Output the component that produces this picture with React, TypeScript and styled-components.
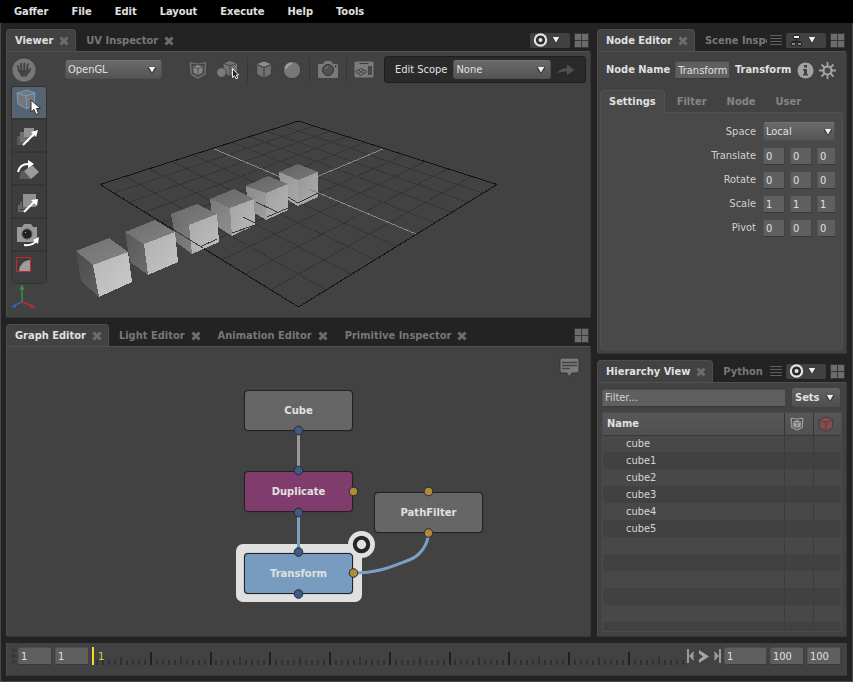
import React from "react";
import styled, { createGlobalStyle, css } from "styled-components";

const GlobalStyle = createGlobalStyle`
  *, *::before, *::after { box-sizing: border-box; }
  body { margin: 0; background: #232323; }
  body, button, input, select, table {
    font-family: "DejaVu Sans Condensed", "DejaVu Sans", sans-serif;
    font-size: 11px;
    line-height: 14px;
    color: #e0e0e0;
  }
  button { padding: 0; border: 0; background: none; cursor: pointer; }
  svg { display: block; flex: none; }
`;

const Window = styled.div`
  display: flex;
  flex-direction: column;
  height: 100vh;
  background: #232323;
  box-shadow: inset 1px 0 #484848, inset -1px -1px #484848;
`;

const MenuBar = styled.nav`
  display: flex;
  gap: 1px;
  height: 23px;
  padding-left: 3px;
  background: #000;
`;

const MenuItem = styled.button`
  padding: 0 11px;
  font-weight: 700;
`;

const Workspace = styled.main`
  display: grid;
  grid-template-columns: 585fr 250fr;
  gap: 6px;
  flex: 1;
  min-height: 0;
  padding: 6px;
`;

const Column = styled.div`
  display: flex;
  flex-direction: column;
  gap: 6px;
  min-width: 0;
  min-height: 0;
`;

const Panel = styled.section<{ $share: number }>`
  display: flex;
  flex-direction: column;
  flex: ${(p) => p.$share} 1 0;
  min-height: 0;
`;

const PanelBody = styled.div`
  display: flex;
  flex-direction: column;
  flex: 1;
  min-height: 0;
  background: #424242;
  border: 1px solid #383838;
  border-top-color: #505050;
  border-left-color: #4c4c4c;
  border-radius: 0 2px 2px 2px;
`;

const TabStrip = styled.div`
  display: flex;
  align-items: center;
  height: 22px;
  padding-right: 2px;
`;

const TabList = styled.div`
  display: flex;
  flex: 1;
  min-width: 0;
  height: 22px;
  overflow: hidden;
`;

const Tab = styled.div<{ $active?: boolean }>`
  display: flex;
  align-items: center;
  flex: none;
  gap: 6px;
  height: 23px;
  padding: 1px 8px 0 9px;
  color: #777;
  ${(p) =>
    p.$active &&
    css`
      margin-right: 1px;
      padding: 0 6px 0 8px;
      color: #e0e0e0;
      background: #424242;
      border: 1px solid #4d4d4d;
      border-bottom: 0;
      border-radius: 4px 4px 0 0;
    `}
`;

const TabLabel = styled.button`
  color: inherit;
  font-weight: 700;
  white-space: nowrap;
`;

const TabTools = styled.div`
  display: flex;
  align-items: center;
  gap: 4px;
  padding-left: 3px;
`;

const PinButton = styled.button`
  display: flex;
  align-items: center;
  gap: 4px;
  width: 40px;
  height: 15px;
  padding-left: 3px;
  background: #414141;
  border-radius: 2px;
`;

const IconButton = styled.button`
  display: grid;
  place-items: center;
  flex: none;
`;

/* Form controls */

const SelectFrame = styled.span<{ $width: number; $cut?: boolean }>`
  display: grid;
  grid-template-columns: 1fr 8px;
  align-items: center;
  width: ${(p) => p.$width}px;
  height: 19px;
  padding-right: ${(p) => (p.$cut ? 2 : 5)}px;
  background: linear-gradient(#6a6a6a, #545454);
  border: 1px solid #505050;
  border-top-color: #737373;
  border-radius: ${(p) => (p.$cut ? "3px 0 0 3px" : "3px")};
`;

const NativeSelect = styled.select`
  grid-area: 1 / 1 / 2 / 3;
  width: 100%;
  height: 17px;
  padding: 0 0 0 2px;
  appearance: none;
  background: none;
  border: 0;
`;

const SelectArrow = styled.span`
  grid-area: 1 / 2 / 2 / 3;
  pointer-events: none;
`;

const TextInput = styled.input<{ $width?: number }>`
  flex: ${(p) => (p.$width ? "none" : "1")};
  width: ${(p) => (p.$width ? p.$width + "px" : "0")};
  height: 18px;
  padding: 0 2px;
  background: #5f5f5f;
  border: 1px solid #535353;
  border-top-color: #4c4c4c;
  border-bottom-color: #383838;
  border-right-color: #424242;
  border-radius: 2px;
  &::placeholder { color: #d0d0d0; opacity: 1; }
`;

/* Viewer */

const ViewerToolbar = styled.div`
  display: flex;
  align-items: center;
  height: 31px;
  padding: 4px 4px 0 5px;
`;

const ToolbarGroup = styled.div<{ $before?: number }>`
  display: flex;
  align-items: center;
  margin-left: ${(p) => p.$before || 0}px;
`;

const Separator = styled.span`
  width: 1px;
  height: 26px;
  margin: 0 7px;
  background: #373737;
`;

const EditScope = styled.div`
  display: flex;
  align-items: center;
  gap: 6px;
  width: 202px;
  height: 27px;
  margin-left: auto;
  padding-left: 10px;
  background: #2a2a2a;
  border: 1px solid #1d1d1d;
  border-radius: 3px;
`;

const ViewerStage = styled.div`
  display: flex;
  flex: 1;
  min-height: 0;
`;

const ToolRail = styled.div`
  display: flex;
  flex-direction: column;
  width: 36px;
  margin: 3px 0 0 4px;
`;

const ToolBox = styled.div`
  overflow: hidden;
  border: 1px solid #323232;
  border-radius: 4px;
`;

const ToolButton = styled.button<{ $active?: boolean }>`
  display: grid;
  place-items: center;
  width: 34px;
  height: 33px;
  background: ${(p) => (p.$active ? "#566370" : "#3d3d3d")};
  border-bottom: 2px solid #353535;
  &:last-child { height: 31px; border-bottom: 0; }
`;

const Scene = styled.svg`
  flex: 1;
  min-width: 0;
  height: 100%;
`;

/* Graph editor */

const Canvas = styled.div`
  position: relative;
  flex: 1;
  overflow: hidden;
`;

const NoteButton = styled(IconButton)`
  position: absolute;
  top: 10px;
  right: 10px;
`;

const GraphNode = styled.button<{ $x: number; $y: number; $fill: string }>`
  position: absolute;
  left: ${(p) => p.$x}px;
  top: ${(p) => p.$y}px;
  width: 109px;
  height: 41px;
  background: ${(p) => p.$fill};
  border: 1px solid #222;
  border-radius: 4px;
  box-shadow: 0 0 1px #222;
  font-family: "DejaVu Sans", sans-serif;
  font-size: 10px;
  font-weight: 700;
`;

const NodeHighlight = styled.span`
  position: absolute;
  left: 229px;
  top: 197px;
  width: 126px;
  height: 58px;
  background: #e0e0e0;
  border-radius: 7px;
`;

const GraphLayer = styled.svg`
  position: absolute;
  left: 0;
  top: 0;
  pointer-events: none;
`;

/* Node editor */

const NodeHeader = styled.div`
  display: flex;
  align-items: center;
  height: 34px;
  padding: 2px 10px 0 8px;
  font-weight: 700;
`;

const NodeName = styled.label`
  display: flex;
  align-items: center;
  gap: 5px;
  width: 124px;
`;

const NodeType = styled.span`
  flex: 1;
  padding-left: 5px;
`;

const HeaderIcons = styled.div`
  display: flex;
  gap: 5px;
`;

const Inset = styled.div`
  display: flex;
  flex-direction: column;
  flex: 1;
  min-height: 0;
  margin: 4px 3px 3px 2px;
`;

const InsetTabs = styled.div`
  display: flex;
  height: 22px;
`;

const InsetTab = styled.button<{ $active?: boolean }>`
  height: ${(p) => (p.$active ? 23 : 22)}px;
  padding: 0 ${(p) => (p.$active ? 8 : 9)}px;
  margin-right: ${(p) => (p.$active ? 2 : 0)}px;
  color: ${(p) => (p.$active ? "#e0e0e0" : "#858585")};
  font-weight: 700;
  position: relative;
  border-radius: 4px 4px 0 0;
  border: 1px solid ${(p) => (p.$active ? "#535353" : "transparent")};
  border-bottom: 0;
  background: ${(p) => (p.$active ? "#494949" : "none")};
`;

const Settings = styled.div`
  display: flex;
  flex-direction: column;
  gap: 6px;
  flex: 1;
  padding: 9px 7px;
  background: #494949;
  border: 1px solid #505050;
  border-radius: 0 2px 2px 2px;
`;

const Field = styled.div`
  display: flex;
  justify-content: flex-end;
  align-items: center;
  gap: 7px;
  height: 18px;
  color: #d0d0d0;
  &:first-child { height: 19px; }
`;

const Vector = styled.div`
  display: flex;
  gap: 5px;
  width: 72px;
  overflow: hidden;
`;

/* Hierarchy */

const FilterBar = styled.div`
  display: flex;
  align-items: center;
  gap: 6px;
  padding: 5px 6px 5px 4px;
`;

const SetsButton = styled.button`
  display: flex;
  align-items: center;
  justify-content: space-between;
  width: 48px;
  height: 19px;
  padding: 0 6px 0 3px;
  font-weight: 700;
  background: linear-gradient(#626262, #4e4e4e);
  border-radius: 3px;
`;

const TableFrame = styled.div`
  flex: 1;
  min-height: 0;
  margin: 0 4px 4px 4px;
  overflow: hidden;
  border: 1px solid #4c4c4c;
`;

const SceneTable = styled.table`
  width: 100%;
  table-layout: fixed;
  border-collapse: collapse;
`;

const HeadCell = styled.th<{ $width?: number }>`
  width: ${(p) => (p.$width ? p.$width + "px" : "auto")};
  height: 22px;
  padding: 1px 4px 0;
  text-align: left;
  background: linear-gradient(#575757, #505050);
  border-bottom: 1px solid #383838;
  & + & { border-left: 1px solid #353535; }
`;

const BodyRow = styled.tr`
  height: 17px;
  background: #414141;
  color: #d4d4d4;
  &:nth-child(odd) { background: #484848; }
`;

const BodyCell = styled.td`
  padding: 0 0 0 23px;
  & + & { border-left: 1px solid #3d3d3d; }
`;

/* Timeline */

const Timeline = styled.footer`
  display: flex;
  align-items: flex-start;
  gap: 3px;
  height: 33px;
  margin: 0 6px 6px;
  padding: 4px 6px 0 5px;
  background: #424242;
  border-bottom: 1px solid #383838;
  border-left: 1px solid #4c4c4c;
`;

const Ruler = styled.svg`
  flex: 1;
  min-width: 0;
  height: 18px;
`;

const Transport = styled.div`
  display: flex;
  align-items: center;
  gap: 5px;
  height: 18px;
`;

/* Icons */

const CloseIcon = () => (
  <svg width="10" height="10" viewBox="0 0 10 10">
    <path d="M1.500 1.500 8.500 8.500M8.500 1.500 1.500 8.500" stroke="#6d6d6d" strokeWidth="3" />
  </svg>
);

const ArrowIcon = () => (
  <svg width="8" height="8" viewBox="0 0 8 8">
    <path d="M0 1H8V3L4 8L0 3Z" fill="#3c3c3c" />
    <path d="M.8 1H7.200L4 6.600Z" fill="#f0f0f0" />
  </svg>
);

const LayoutIcon = () => (
  <svg width="15" height="15" viewBox="0 0 15 15">
    <path d="M0 0h15v15H0z" fill="#373737" />
    <path d="M1 1h6v6H1zM8 1h6v6H8zM1 8h6v6H1zM8 8h6v6H8z" fill="#6c6c6c" />
  </svg>
);

const MenuLinesIcon = () => (
  <svg width="12" height="12" viewBox="0 0 12 12">
    <path d="M0 1.500h12M0 4.500h12M0 7.500h12M0 10.500h12" stroke="#5e5e5e" />
  </svg>
);

const TargetIcon = () => (
  <svg width="15" height="14" viewBox="0 0 15 14">
    <circle cx="7.500" cy="7" r="6.700" fill="#e6e6e6" />
    <circle cx="7.500" cy="7" r="4.600" fill="#2b2b2b" />
    <circle cx="7.500" cy="7" r="2" fill="#e6e6e6" />
  </svg>
);

const NodesIcon = () => (
  <svg width="15" height="13" viewBox="0 0 15 13">
    <path d="M7.500 4v4M3.500 10V7.500h8V10" fill="none" stroke="#222" />
    <path d="M4.500 1.500h6v3h-6z" fill="#eee" stroke="#222" />
    <path d="M2.500 8.500h4v3h-4zM8.500 8.500h4v3h-4z" fill="#888" stroke="#222" />
  </svg>
);

const HandIcon = () => (
  <svg width="24" height="24" viewBox="0 0 24 24">
    <circle cx="12" cy="12" r="11.500" fill="#777" />
    <g stroke="#444" strokeWidth="2" strokeLinecap="round">
      <path d="M7 13 6 8M9.500 12 9 6M12.300 12V5.500M15 12l.8-5.500M16 15l2.200-4" />
    </g>
    <path d="M6.200 12h9.600l1 1.500-2 5H9z" fill="#444" />
  </svg>
);

const ShadingIcon = () => (
  <svg width="20" height="20" viewBox="0 0 20 20">
    <path d="M10 3 18.500 1 19 4l-1 11.200L10 19.500 2 15.200 1 4l.5-3z" fill="#6a6a6a" stroke="#3a3a3a" strokeWidth=".8" />
    <path d="M10 4.500 16.500 3.500 16 13.500 10 17 4 13.500 3.500 3.500z" fill="#454545" />
    <path d="M10 5l4.800 1.600-.4 6.200L10 15.300l-4.400-2.500-.4-6.200z" fill="#858585" />
    <path d="M5.500 6.800l4.500 2 4.500-2M10 8.800v6.200" fill="none" stroke="#444" strokeWidth=".8" />
  </svg>
);

const VisibilityIcon = () => (
  <svg width="24" height="20" viewBox="0 0 24 20">
    <path d="M14 .5l8 2.600-.5 10L14 16.500 7 13V3z" fill="#747474" stroke="#3a3a3a" />
    <path d="M7 3.200l7 2.500 8-2.500M14 5.700v10" fill="none" stroke="#444" />
    <circle cx="5.500" cy="12.500" r="4.800" fill="#7c7c7c" stroke="#444" />
    <path d="M16.500 8.500v9l2-1.700 1.500 3 1.800-.8-1.400-3h2.200z" fill="#222" stroke="#eee" strokeWidth="1" />
  </svg>
);

const CubeIcon = () => (
  <svg width="18" height="20" viewBox="0 0 18 20">
    <path d="M9 1l7.800 3-.8 10.500-7 4-7-4L1.200 4z" fill="#717171" stroke="#353535" strokeWidth=".8" />
    <path d="M2 4l7-2.500L16 4 9 7z" fill="#8c8c8c" />
    <path d="M1.500 4.500 9 7.500l7.500-3M9 7.500V18" fill="none" stroke="#383838" />
  </svg>
);

const SphereIcon = () => (
  <svg width="20" height="20" viewBox="0 0 20 20">
    <circle cx="10" cy="10" r="8.700" fill="#777" stroke="#393939" />
    <path d="M4 8q1-3.500 5-4.500" fill="none" stroke="#a2a2a2" strokeWidth="2" strokeLinecap="round" />
  </svg>
);

const CameraIcon = () => (
  <svg width="22" height="19" viewBox="0 0 22 19">
    <path d="M2 4h4l2-3h6l2 3h3.500q1.500 0 1.500 1.500v11q0 1.500-1.500 1.500h-17Q1 18 1 16.500v-11Q1 4 2 4z" fill="#7a7a7a" />
    <circle cx="11" cy="10" r="5.500" fill="#505050" stroke="#333" />
    <path d="M8 9q1-2 3-2" fill="none" stroke="#888" />
    <circle cx="18.500" cy="6.500" r="1" fill="#333" />
  </svg>
);

const RenderIcon = () => (
  <svg width="20" height="17" viewBox="0 0 20 17">
    <rect x=".5" y=".5" width="19" height="16" rx="1.500" fill="#7b7b7b" />
    <path d="M5.500 2.500h9" stroke="#3c3c3c" />
    <path d="M14 5h4v9h-4z" fill="#484848" />
    <path d="M1.500 10.500 7 7.500l6 3-6 4zM4 9l6 3.500M10 9l-5.500 3.500" fill="none" stroke="#3c3c3c" strokeWidth=".9" />
  </svg>
);

const PublishIcon = () => (
  <svg width="18" height="12" viewBox="0 0 18 12">
    <path d="M0 9q4-5 10-5V.5L17.500 6 10 11V7.500Q5 7 0 9z" fill="#505050" />
  </svg>
);

const InfoIcon = () => (
  <svg width="17" height="17" viewBox="0 0 17 17">
    <circle cx="8.500" cy="8.500" r="8" fill="#a2a2a2" />
    <path d="M7 3h3v2.500H7zM6 7h4v5h1v1.500H6V12h1V8.500H6z" fill="#424242" />
  </svg>
);

const GearIcon = () => (
  <svg width="17" height="17" viewBox="0 0 17 17">
    <path d="M8.500 0v17M0 8.500h17M2.500 2.500l12 12M14.500 2.500l-12 12" stroke="#a2a2a2" strokeWidth="1.800" />
    <circle cx="8.500" cy="8.500" r="4" fill="#484848" stroke="#a2a2a2" strokeWidth="2.200" />
  </svg>
);

const CommentIcon = () => (
  <svg width="21" height="21" viewBox="0 0 21 21">
    <path d="M3 1h15q2 0 2 2v11q0 2-2 2h-5l-3 4-2-4H3q-2 0-2-2V3q0-2 2-2z" fill="#7b7b7b" stroke="#373737" />
    <path d="M3 5.500h15M3 8.500h15M3 11.500h8" stroke="#444" strokeWidth="1.500" />
  </svg>
);

const VisibleColumnIcon = () => (
  <svg width="16" height="16" viewBox="0 0 16 16">
    <path d="M8 2l6.500-1 .5 2-.7 9L8 15.300 1.700 12 1 3l.5-2z" fill="#9a9a9a" stroke="#444" strokeWidth=".7" />
    <path d="M8 3.500l5-.5-.5 8L8 13.500 3.500 11 3 3z" fill="#4c4c4c" />
    <path d="M8 4l4 1.500-.4 5L8 12.500l-3.600-2-.4-5z" fill="#a6a6a6" />
    <path d="M4.200 5.700 8 7.300l3.800-1.600M8 7.300v5" fill="none" stroke="#555" strokeWidth=".8" />
  </svg>
);

const ExcludedColumnIcon = () => (
  <svg width="16" height="16" viewBox="0 0 16 16">
    <path d="M8 1l7 2.500-.8 8.500L8 15.300 1.800 12 1 3.500z" fill="#854e4e" stroke="#4a3c3c" />
    <path d="M1 3.800 8 6.500l7-2.700M8 6.500v8" fill="none" stroke="#583c3c" />
  </svg>
);

const toolGlyphs: Record<string, React.ReactNode> = {
  "Select": (
    <>
      <path d="M5 5l10-3 8 3-1 11-7 5-9-5z" fill="#777" stroke="#6f9cc8" />
      <path d="M5 5l9 3 9-3M14 8l1 13" fill="none" stroke="#6f9cc8" />
      <path d="M19 12v12l3-2.500 2 5 2.500-1-2-5h4z" fill="#fff" stroke="#2c2c2c" />
    </>
  ),
  "Translate": (
    <>
      <path d="M5 15h8v9H5z" fill="#595959" />
      <path d="M8 11h9v10H8z" fill="#707070" />
      <path d="M12 7h10v9H12z" fill="#929292" />
      <path d="M11 24 22 13" stroke="#fff" strokeWidth="2" />
      <path d="M26 9l-7 2 5 5z" fill="#fff" />
    </>
  ),
  "Rotate": (
    <>
      <path d="M9 17l-2 8h12v-8z" fill="#5c5c5c" />
      <path d="M20 11l7 7-8 7-7-8z" fill="#9b9b9b" />
      <path d="M6 18Q8 9 18 10" fill="none" stroke="#fff" strokeWidth="2" />
      <path d="M16 6l6 4-6 4z" fill="#fff" />
    </>
  ),
  "Scale": (
    <>
      <path d="M7 18v6h6M9 15v6h6" fill="none" stroke="#666" strokeWidth="2" />
      <path d="M11 7h13v13H11z" fill="#929292" />
      <path d="M12 25 22 15" stroke="#fff" strokeWidth="2" />
      <path d="M26 12l-7 1 6 6z" fill="#fff" />
    </>
  ),
  "Camera": (
    <>
      <path d="M5 7h5l2-3h7l2 3h4v15H5z" fill="#999" />
      <circle cx="15" cy="14" r="5" fill="#222" stroke="#555" />
      <path d="M13 13l1-1" stroke="#bbb" />
      <path d="M12 25q9 1 13-5" fill="none" stroke="#fff" strokeWidth="2" />
      <path d="M21 20l6-3-1 7z" fill="#fff" />
    </>
  ),
  "Crop window": (
    <>
      <path d="M7 18Q8 8 18 7v11z" fill="#9d9d9d" />
      <path d="M4.500 4.500h14v14h-14z" fill="none" stroke="#c62828" />
    </>
  ),
};

/* Scene drawing */

const project = (u: number, v: number) => {
  const sum = u + v;
  const depth = 1 - 0.1586 * sum;
  return [298.5 + (99.25 * (u - v)) / depth, 184.5 + (41.82 * sum) / depth];
};

const line = (u1: number, v1: number, u2: number, v2: number) =>
  `M${project(u1, v1).join(" ")}L${project(u2, v2).join(" ")}`;

const steps = [-0.8, -0.6, -0.4, -0.2, 0, 0.2, 0.4, 0.6, 0.8];
const gridPath = steps.map((t) => line(t, -1, t, 1) + line(-1, t, 1, t)).join("");
const borderPath = line(-1, -1, 1, -1) + line(1, -1, 1, 1) + line(1, 1, -1, 1) + line(-1, 1, -1, -1);

type Box = { top: string; side: string; front: string; shades: [string, string, string] };

const boxes: Box[] = [
  { top: "279,172 298,164 318,172 298,180", side: "279,172 298,180 298,206 281,196", front: "298,180 318,172 318,197 298,206", shades: ["#6c6c6c", "#a2a2a2", "#a5a5a5"] },
  { top: "246,186 268,176 288,184 266,193", side: "246,186 266,193 266,220 248,209", front: "266,193 288,184 288,210 266,220", shades: ["#6d6d6d", "#969696", "#adadad"] },
  { top: "210,199 234,189 254,199 230,208", side: "210,199 230,208 232,236 213,224", front: "230,208 254,199 255,225 232,236", shades: ["#707070", "#858585", "#b2b2b2"] },
  { top: "171,214 197,204 217,214 189,225", side: "171,214 189,225 192,254 176,242", front: "189,225 217,214 219,242 192,254", shades: ["#747474", "#747474", "#b8b8b8"] },
  { top: "125,232 155,220 175,232 144,244", side: "125,232 144,244 148,275 130,262", front: "144,244 175,232 178,262 148,275", shades: ["#777", "#606060", "#bfbfbf"] },
  { top: "76,251 109,238 128,252 93,265", side: "76,251 93,265 99,297 81,281", front: "93,265 128,252 132,282 99,297", shades: ["#7a7a7a", "#525252", "#c6c6c6"] },
];

const ViewerScene = () => (
  <Scene viewBox="47 83 543 234" preserveAspectRatio="xMinYMin meet" shapeRendering="crispEdges" role="img" aria-label="3D scene">
    <defs>
      <linearGradient id="shade" x1="0" y1="0" x2="1" y2="1">
        <stop offset="0" stopColor="#000" stopOpacity=".08" />
        <stop offset="1" stopColor="#fff" stopOpacity=".08" />
      </linearGradient>
    </defs>
    <path d={gridPath} fill="none" stroke="#353535" />
    <path d={line(0, -1, 0, 1) + line(-1, 0, 1, 0)} stroke="#868686" />
    <path d={borderPath} fill="none" stroke="#141414" />
    {boxes.map((b) => (
      <g key={b.top}>
        <polygon points={b.top} fill={b.shades[0]} />
        <polygon points={b.side} fill={b.shades[1]} />
        <polygon points={b.front} fill={b.shades[2]} />
        <polygon points={b.top} fill="url(#shade)" />
        <polygon points={b.side} fill="url(#shade)" />
        <polygon points={b.front} fill="url(#shade)" />
      </g>
    ))}
    <path d="M174 230 203 248M200 247 217 239M243 217 255 223M232 233 255 225M256 202 277 212M267 217 288 208M288 197 298 203 318 193" fill="none" stroke="#3a3a3a" />
    <path d="M309 189 318 193" stroke="#868686" />
  </Scene>
);

const Gizmo = () => (
  <svg width="36" height="28" viewBox="11 284 36 28">
    <path d="M22 302V287" stroke="#2f9a35" strokeWidth="1.500" />
    <path d="M22 284.500l2.500 5h-5z" fill="#2f9a35" />
    <path d="M22 302 15 305" stroke="#3a62c0" strokeWidth="1.500" />
    <path d="M11 307.500l4-4 1 4z" fill="#3a62c0" />
    <path d="M22 302l9 3.500" stroke="#b83030" strokeWidth="1.500" />
    <path d="M36 307.500l-5-4-1 4z" fill="#b83030" />
  </svg>
);

/* Shared pieces */

const Select = ({ label, value, width, cut }: { label: string; value: string; width: number; cut?: boolean }) => (
  <SelectFrame $width={width} $cut={cut}>
    <NativeSelect aria-label={label} defaultValue={value}>
      <option>{value}</option>
    </NativeSelect>
    <SelectArrow><ArrowIcon /></SelectArrow>
  </SelectFrame>
);

const PanelTab = ({ name, active, closable = true }: { name: string; active?: boolean; closable?: boolean }) => (
  <Tab $active={active}>
    <TabLabel role="tab" aria-selected={!!active}>{name}</TabLabel>
    {closable && <IconButton aria-label={`Close ${name}`}><CloseIcon /></IconButton>}
  </Tab>
);

const LayoutButton = () => <IconButton aria-label="Layout"><LayoutIcon /></IconButton>;

const menus = ["Gaffer", "File", "Edit", "Layout", "Execute", "Help", "Tools"];

const ViewerPanel = () => (
  <Panel $share={289}>
    <TabStrip>
      <TabList role="tablist">
        <PanelTab name="Viewer" active />
        <PanelTab name="UV Inspector" />
      </TabList>
      <TabTools>
        <PinButton aria-label="Focus"><TargetIcon /><ArrowIcon /></PinButton>
        <LayoutButton />
      </TabTools>
    </TabStrip>
    <PanelBody>
      <ViewerToolbar>
        <IconButton aria-label="Pan"><HandIcon /></IconButton>
        <ToolbarGroup $before={29}><Select label="Renderer" value="OpenGL" width={97} /></ToolbarGroup>
        <ToolbarGroup $before={26}>
          <IconButton aria-label="Drawing mode"><ShadingIcon /></IconButton>
        </ToolbarGroup>
        <ToolbarGroup $before={8}>
          <IconButton aria-label="Selection mask"><VisibilityIcon /></IconButton>
        </ToolbarGroup>
        <ToolbarGroup>
          <Separator />
          <IconButton aria-label="Shading"><CubeIcon /></IconButton>
        </ToolbarGroup>
        <ToolbarGroup $before={9}>
          <IconButton aria-label="Lighting"><SphereIcon /></IconButton>
          <Separator />
          <IconButton aria-label="Camera"><CameraIcon /></IconButton>
          <Separator />
          <IconButton aria-label="Render settings"><RenderIcon /></IconButton>
        </ToolbarGroup>
        <EditScope>
          Edit Scope
          <Select label="Edit Scope" value="None" width={98} />
          <IconButton aria-label="Edit scope actions"><PublishIcon /></IconButton>
        </EditScope>
      </ViewerToolbar>
      <ViewerStage>
        <ToolRail>
          <ToolBox>
            {Object.entries(toolGlyphs).map(([name, glyph], i) => (
              <ToolButton key={name} $active={i === 0} aria-label={name}>
                <svg width="30" height="28" viewBox="2 1 30 28">{glyph}</svg>
              </ToolButton>
            ))}
          </ToolBox>
          <Gizmo />
        </ToolRail>
        <ViewerScene />
      </ViewerStage>
    </PanelBody>
  </Panel>
);

const nodes = [
  { name: "Cube", x: 237, y: 43, fill: "#666" },
  { name: "Duplicate", x: 237, y: 124, fill: "#803c6c" },
  { name: "PathFilter", x: 367, y: 145, fill: "#666" },
  { name: "Transform", x: 237, y: 206, fill: "#789cbf" },
];

const ports: [number, number, string][] = [
  [298.5, 430.5, "#3f5a84"],
  [298.5, 470.5, "#3f5a84"],
  [298.5, 512.5, "#3f5a84"],
  [298.5, 552, "#3f5a84"],
  [298.5, 594, "#3f5a84"],
  [353.5, 491.5, "#b08a38"],
  [353.5, 573, "#b08a38"],
  [428.5, 491.5, "#b08a38"],
  [428.5, 533, "#b08a38"],
];

const GraphPanel = () => (
  <Panel $share={313}>
    <TabStrip>
      <TabList role="tablist">
        <PanelTab name="Graph Editor" active />
        <PanelTab name="Light Editor" />
        <PanelTab name="Animation Editor" />
        <PanelTab name="Primitive Inspector" />
      </TabList>
      <LayoutButton />
    </TabStrip>
    <PanelBody>
      <Canvas>
        <NodeHighlight />
        {nodes.map((n) => (
          <GraphNode key={n.name} $x={n.x} $y={n.y} $fill={n.fill}>{n.name}</GraphNode>
        ))}
        <GraphLayer width="583" height="289" viewBox="7 347 583 289">
          <path d="M298.500 430v40" stroke="#999" strokeWidth="3" />
          <path d="M298.500 512v40" stroke="#7aa0c4" strokeWidth="3" />
          <path d="M428.500 533C428 545 420 556 409 560C390 567 378 573 354 573" fill="none" stroke="#7aa0c4" strokeWidth="3" />
          {ports.map(([x, y, fill]) => (
            <circle key={`${x},${y}`} cx={x} cy={y} r="4.300" fill={fill} stroke="#262830" />
          ))}
          <circle cx="361.500" cy="544.500" r="13.500" fill="#e0e0e0" />
          <circle cx="361.500" cy="544.500" r="6.700" fill="none" stroke="#262626" strokeWidth="4" />
        </GraphLayer>
        <NoteButton aria-label="Annotations"><CommentIcon /></NoteButton>
      </Canvas>
    </PanelBody>
  </Panel>
);

const vectors = [
  { name: "Translate", value: "0" },
  { name: "Rotate", value: "0" },
  { name: "Scale", value: "1" },
  { name: "Pivot", value: "0" },
];

const NodePanel = () => (
  <Panel $share={325}>
    <TabStrip>
      <TabList role="tablist">
        <PanelTab name="Node Editor" active />
        <PanelTab name="Scene Inspector" closable={false} />
      </TabList>
      <TabTools>
        <IconButton aria-label="All tabs"><MenuLinesIcon /></IconButton>
        <PinButton aria-label="Node set"><NodesIcon /><ArrowIcon /></PinButton>
        <LayoutButton />
      </TabTools>
    </TabStrip>
    <PanelBody>
      <NodeHeader>
        <NodeName>
          Node Name
          <TextInput defaultValue="Transform" />
        </NodeName>
        <NodeType>Transform</NodeType>
        <HeaderIcons>
          <IconButton aria-label="Info"><InfoIcon /></IconButton>
          <IconButton aria-label="Node options"><GearIcon /></IconButton>
        </HeaderIcons>
      </NodeHeader>
      <Inset>
        <InsetTabs role="tablist">
          <InsetTab $active role="tab">Settings</InsetTab>
          <InsetTab role="tab">Filter</InsetTab>
          <InsetTab role="tab">Node</InsetTab>
          <InsetTab role="tab">User</InsetTab>
        </InsetTabs>
        <Settings>
          <Field>
            Space
            <Select label="Space" value="Local" width={72} cut />
          </Field>
          {vectors.map((v) => (
            <Field key={v.name}>
              {v.name}
              <Vector>
                {["x", "y", "z"].map((axis) => (
                  <TextInput key={axis} $width={22} aria-label={`${v.name} ${axis}`} defaultValue={v.value} />
                ))}
              </Vector>
            </Field>
          ))}
        </Settings>
      </Inset>
    </PanelBody>
  </Panel>
);

const rows = ["cube", "cube1", "cube2", "cube3", "cube4", "cube5", "", "", "", "", "", ""];

const HierarchyPanel = () => (
  <Panel $share={277}>
    <TabStrip>
      <TabList role="tablist">
        <PanelTab name="Hierarchy View" active />
        <PanelTab name="Python" closable={false} />
      </TabList>
      <TabTools>
        <IconButton aria-label="All tabs"><MenuLinesIcon /></IconButton>
        <PinButton aria-label="Focus"><TargetIcon /><ArrowIcon /></PinButton>
        <LayoutButton />
      </TabTools>
    </TabStrip>
    <PanelBody>
      <FilterBar>
        <TextInput aria-label="Filter" placeholder="Filter..." />
        <SetsButton>Sets<ArrowIcon /></SetsButton>
      </FilterBar>
      <TableFrame>
        <SceneTable>
          <thead>
            <tr>
              <HeadCell>Name</HeadCell>
              <HeadCell $width={29} aria-label="Visible"><VisibleColumnIcon /></HeadCell>
              <HeadCell $width={28} aria-label="Excluded"><ExcludedColumnIcon /></HeadCell>
            </tr>
          </thead>
          <tbody>
            {rows.map((name, i) => (
              <BodyRow key={i}>
                <BodyCell>{name}</BodyCell>
                <BodyCell />
                <BodyCell />
              </BodyRow>
            ))}
          </tbody>
        </SceneTable>
      </TableFrame>
    </PanelBody>
  </Panel>
);

const ticks = Array.from({ length: 99 }, (_, i) => i + 1);
const tickHeight = (frame: number) => (frame % 10 === 0 ? 13 : frame % 5 === 0 ? 8 : 5);

const FrameInput = ({ label, value, width }: { label: string; value: string; width: number }) => (
  <TextInput $width={width} aria-label={label} defaultValue={value} />
);

const TimelineBar = () => (
  <Timeline>
    <svg width="3" height="18" viewBox="0 0 3 18">
      <path d="M0 3h3M0 9h3M0 15h3" stroke="#363636" strokeWidth="3" />
    </svg>
    <FrameInput label="Start" value="1" width={34} />
    <FrameInput label="Range start" value="1" width={34} />
    <Ruler viewBox="92 647 591 18" preserveAspectRatio="xMinYMin meet" role="slider" aria-label="Frame" aria-valuenow={1}>
      {ticks.map((f) => (
        <path key={f} d={`M${Math.round(91 + f * 5.975)} 665v-${tickHeight(f)}`} stroke={f % 10 ? "#303030" : "#202020"} strokeWidth="2" />
      ))}
      <path d="M93 647v18" stroke="#f2d92a" strokeWidth="2" />
      <text x="98" y="660" fontSize="11" fill="#e0cc35">1</text>
    </Ruler>
    <Transport>
      <IconButton aria-label="Go to start">
        <svg width="7" height="14" viewBox="0 0 7 14"><path d="M0 0h2v14H0zM6.500 2v10L2 7z" fill="#999" /></svg>
      </IconButton>
      <IconButton aria-label="Play">
        <svg width="10" height="13" viewBox="0 0 10 13"><path d="M0 0l10 6.500L0 13v-3.500l4-3-4-3z" fill="#a5a5a5" /></svg>
      </IconButton>
      <IconButton aria-label="Go to end">
        <svg width="7" height="14" viewBox="0 0 7 14"><path d="M5 0h2v14H5zM.5 2v10L5 7z" fill="#999" /></svg>
      </IconButton>
    </Transport>
    <FrameInput label="Current frame" value="1" width={43} />
    <FrameInput label="Range end" value="100" width={34} />
    <FrameInput label="End" value="100" width={34} />
  </Timeline>
);

export default function App() {
  return (
    <Window>
      <GlobalStyle />
      <MenuBar>
        {menus.map((m) => (
          <MenuItem key={m}>{m}</MenuItem>
        ))}
      </MenuBar>
      <Workspace>
        <Column>
          <ViewerPanel />
          <GraphPanel />
        </Column>
        <Column>
          <NodePanel />
          <HierarchyPanel />
        </Column>
      </Workspace>
      <TimelineBar />
    </Window>
  );
}
